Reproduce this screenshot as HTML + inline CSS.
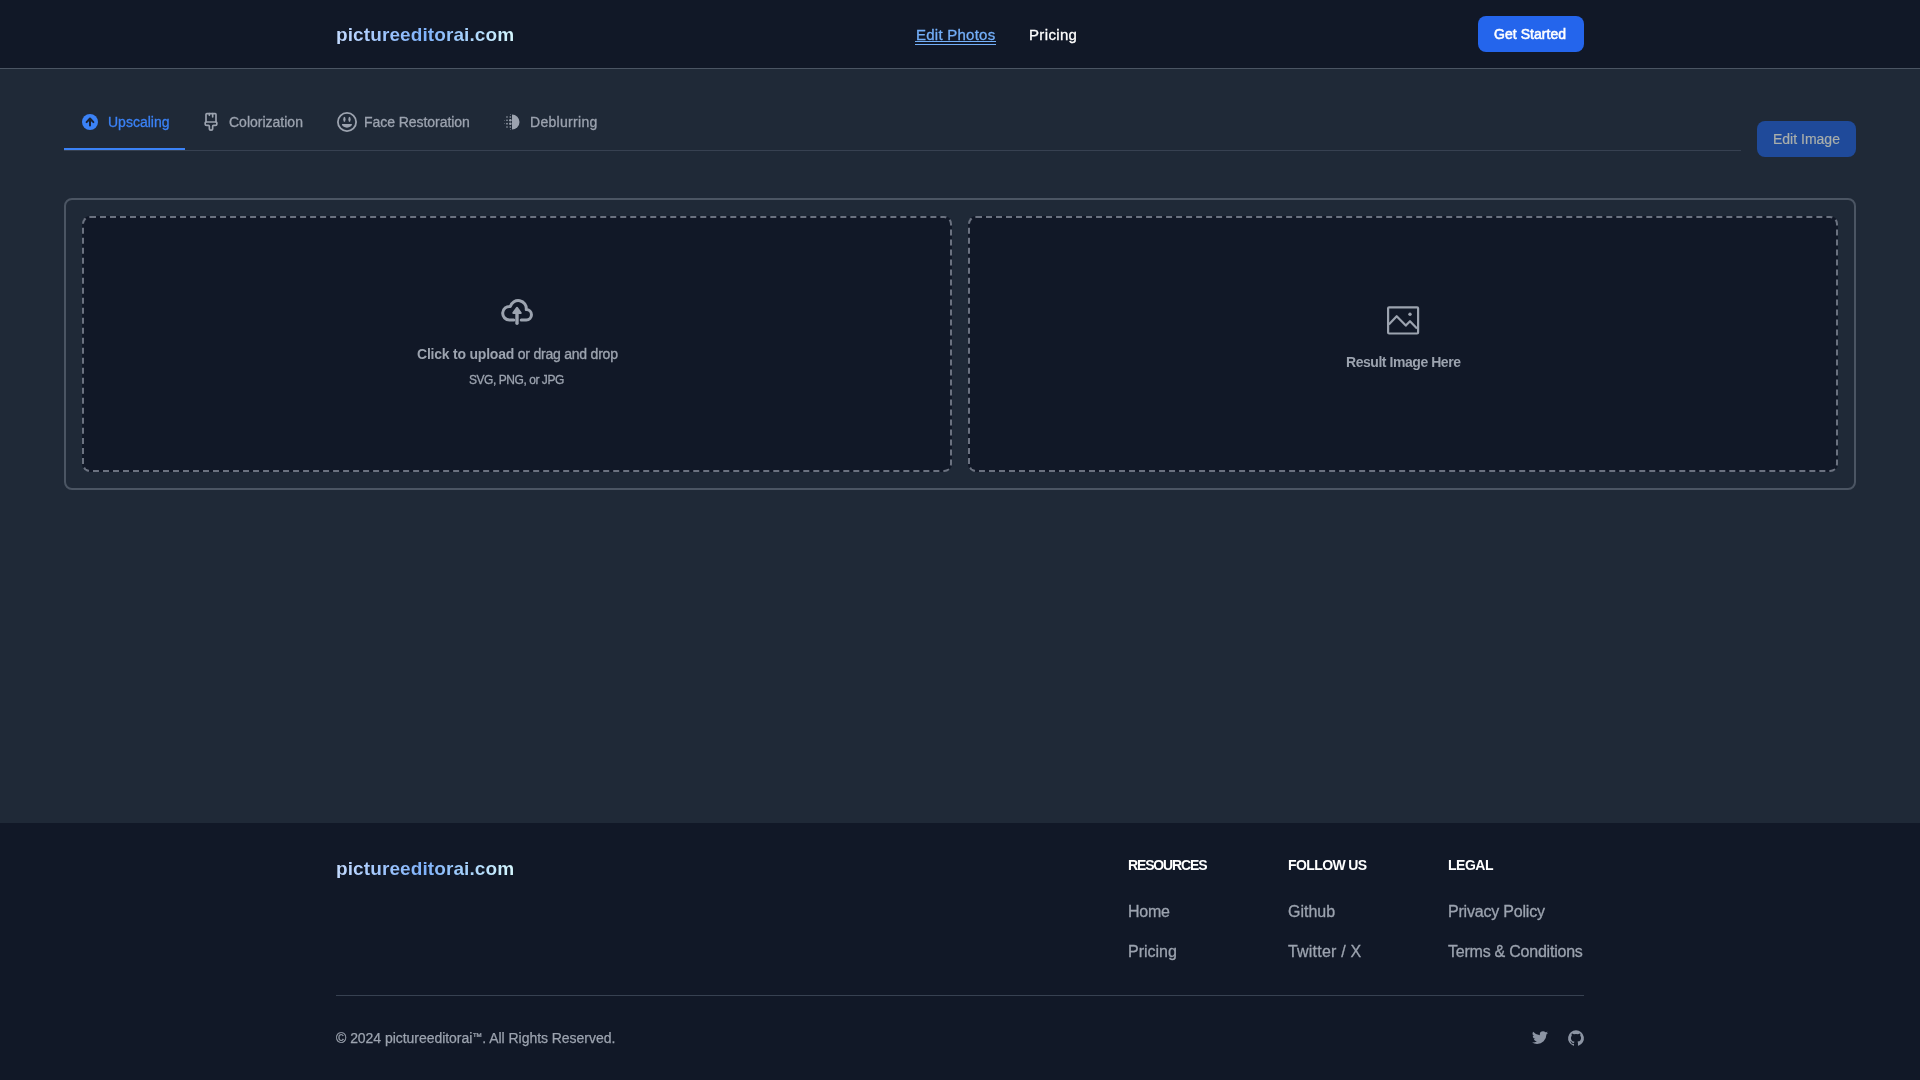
<!DOCTYPE html>
<html>
<head>
<meta charset="utf-8">
<style>
*{margin:0;padding:0;box-sizing:border-box}
html,body{width:1920px;height:1080px;overflow:hidden;background:#1f2937;font-family:"Liberation Sans",sans-serif}
.a{position:absolute;white-space:nowrap;line-height:1;will-change:transform}
#hdr{position:absolute;left:0;top:0;width:1920px;height:69px;background:#111827;border-bottom:1px solid #4b5563}
#main{position:absolute;left:0;top:69px;width:1920px;height:754px;background:#1f2937}
#ftr{position:absolute;left:0;top:823px;width:1920px;height:257px;background:#111827}
.logo{font-size:19px;font-weight:700;letter-spacing:0.1px;background:linear-gradient(90deg,#c3dafe 0%,#7fb2fb 50%,#d4f6fd 100%);-webkit-background-clip:text;background-clip:text;color:transparent}
.btn{position:absolute;border-radius:6px}
.tabtxt{font-size:14px;color:#9ca3af;-webkit-text-stroke:0.3px currentColor}
.flink{font-size:16px;color:#9ca3af;-webkit-text-stroke:0.3px currentColor}
.fhead{font-size:14px;font-weight:700;color:#fff;letter-spacing:-0.7px}
svg{position:absolute;overflow:visible}
</style>
</head>
<body>
<div id="hdr">
  <div class="a logo" style="left:336px;top:24.7px">pictureeditorai.com</div>
  <div class="a" style="left:916px;top:27.2px;font-size:15px;color:#74aff9;letter-spacing:0.25px;-webkit-text-stroke:0.3px currentColor">Edit Photos</div>
  <div style="position:absolute;left:915px;top:41px;width:81px;height:1px;background:#74aff9"></div>
  <div style="position:absolute;left:915px;top:44px;width:81px;height:1px;background:#74aff9"></div>
  <div class="a" style="left:1028.5px;top:27.2px;font-size:15px;color:#fff;letter-spacing:0.35px;-webkit-text-stroke:0.3px currentColor">Pricing</div>
  <div class="btn" style="left:1478px;top:16px;width:106px;height:36px;background:#2465ec;border-radius:8px"></div>
  <div class="a" style="left:1494px;top:27px;font-size:14px;font-weight:400;color:#fff;letter-spacing:0.05px;-webkit-text-stroke:0.55px currentColor">Get Started</div>
</div>
<div id="main"></div>

<!-- tabs -->
<div style="position:absolute;left:64px;top:150px;width:1677px;height:1px;background:#374151"></div>
<div style="position:absolute;left:64px;top:148px;width:121px;height:2px;background:#3b82f6"></div>

<svg style="left:80px;top:112px" width="20" height="20" viewBox="0 0 20 20">
  <circle cx="10" cy="10" r="8" fill="#3b82f6"/>
  <path d="M6.6 10.1 L10 6.5 L13.4 10.1 M10 6.7 V13.6" fill="none" stroke="#1b2230" stroke-width="2" stroke-linecap="round" stroke-linejoin="round"/>
</svg>
<div class="a tabtxt" style="left:108px;top:115px;color:#3b82f6">Upscaling</div>

<svg style="left:201px;top:112px" width="20" height="20" viewBox="0 0 24 24" fill="none" stroke="#9ca3af" stroke-width="2" stroke-linecap="round" stroke-linejoin="round">
  <path d="M10 2v2"/><path d="M14 2v4"/><path d="M17 2a1 1 0 0 1 1 1v9H6V3a1 1 0 0 1 1-1z"/>
  <path d="M6 12a1 1 0 0 0-1 1v1a2 2 0 0 0 2 2h2a1 1 0 0 1 1 1v2.9a2 2 0 1 0 4 0V17a1 1 0 0 1 1-1h2a2 2 0 0 0 2-2v-1a1 1 0 0 0-1-1"/>
</svg>
<div class="a tabtxt" style="left:229px;top:115px">Colorization</div>

<svg style="left:337px;top:112px" width="20" height="20" viewBox="0 0 20 20">
  <circle cx="10" cy="10" r="9.1" fill="none" stroke="#9ca3af" stroke-width="1.8"/>
  <ellipse cx="7.4" cy="7.3" rx="1.1" ry="2.6" fill="#9ca3af"/>
  <ellipse cx="12.5" cy="7.3" rx="1.1" ry="2.6" fill="#9ca3af"/>
  <path d="M4.9 12 H15 A5.05 3.7 0 0 1 4.9 12 Z" fill="#9ca3af"/>
</svg>
<div class="a tabtxt" style="left:364px;top:115px;letter-spacing:-0.05px">Face Restoration</div>

<svg style="left:502px;top:112px" width="20" height="20" viewBox="0 0 24 24" fill="#9ca3af">
  <path d="M12 3v18a9 9 0 0 0 0-18z"/>
  <circle cx="10" cy="3" r=".5"/><circle cx="10" cy="21" r=".5"/>
  <circle cx="10" cy="6" r="1"/><circle cx="10" cy="10" r="1.5"/><circle cx="10" cy="14" r="1.5"/><circle cx="10" cy="18" r="1"/>
  <circle cx="6" cy="6" r="1"/><circle cx="6" cy="10" r="1"/><circle cx="6" cy="14" r="1"/><circle cx="6" cy="18" r="1"/>
  <circle cx="3" cy="10" r=".5"/><circle cx="3" cy="14" r=".5"/>
</svg>
<div class="a tabtxt" style="left:530px;top:115px;letter-spacing:0.3px">Deblurring</div>

<div class="btn" style="left:1757px;top:121px;width:99px;height:36px;background:#1f4a9a;border-radius:8px"></div>
<div class="a" style="left:1773px;top:132px;font-size:14px;color:#a9aeab;-webkit-text-stroke:0.2px currentColor">Edit Image</div>

<!-- upload box -->
<div style="position:absolute;left:64px;top:198px;width:1792px;height:292px;border:2px solid #4b5563;border-radius:8px"></div>
<div style="position:absolute;left:82px;top:216px;width:870px;height:256px;border:2px dashed #6b7280;border-radius:8px;background:#111827"></div>
<div style="position:absolute;left:968px;top:216px;width:870px;height:256px;border:2px dashed #6b7280;border-radius:8px;background:#111827"></div>

<svg style="left:501px;top:299px" width="32" height="27" viewBox="0 0 32 27" fill="none" stroke="#9ca3af" stroke-width="3" stroke-linecap="round" stroke-linejoin="round">
  <path d="M12.8 21 H8.5 A6.8 6.8 0 1 1 9.39 7.46 A8.1 8.1 0 0 1 25.24 10.6 A5.2 5.2 0 0 1 25.3 21 H20.2"/>
</svg>
<svg style="left:501px;top:299px" width="32" height="27" viewBox="0 0 32 27">
  <path d="M12.4 14 L16 9 L19.6 14 Z" fill="#9ca3af" stroke="#9ca3af" stroke-width="2.2" stroke-linejoin="round"/>
  <path d="M16 13 V24.3" stroke="#9ca3af" stroke-width="3.4" stroke-linecap="round"/>
</svg>
<div class="a" style="left:417px;top:347px;font-size:14px;color:#9ca3af;letter-spacing:-0.22px;-webkit-text-stroke:0.35px currentColor"><b style="-webkit-text-stroke:0">Click to upload</b> or drag and drop</div>
<div class="a" style="left:469px;top:374px;font-size:12px;color:#9ca3af;letter-spacing:-0.45px;-webkit-text-stroke:0.3px currentColor">SVG, PNG, or JPG</div>

<svg style="left:1386px;top:305px" width="34" height="30" viewBox="0 0 34 30" fill="none" stroke="#9ca3af" stroke-width="2.2" stroke-linejoin="round">
  <rect x="2.1" y="2.3" width="30" height="26.2" rx="1"/>
  <path d="M2.8 19.6 L10.7 11.2 L19.8 20.6 L24 16.2 L31 23.6"/>
  <circle cx="24" cy="9.2" r="1.7" fill="#9ca3af" stroke="none"/>
</svg>
<div class="a" style="left:1346px;top:355px;font-size:14px;font-weight:700;color:#9ca3af;letter-spacing:-0.45px">Result Image Here</div>

<!-- footer -->
<div id="ftr">
  <div class="a logo" style="left:336px;top:36.4px">pictureeditorai.com</div>
  <div class="a fhead" style="left:1128px;top:35px;letter-spacing:-1.15px">RESOURCES</div>
  <div class="a fhead" style="left:1288px;top:35px;letter-spacing:-0.6px">FOLLOW US</div>
  <div class="a fhead" style="left:1448px;top:35px;letter-spacing:-0.5px">LEGAL</div>
  <div class="a flink" style="left:1127.5px;top:80.5px;letter-spacing:-0.25px">Home</div>
  <div class="a flink" style="left:1128px;top:120.5px">Pricing</div>
  <div class="a flink" style="left:1288px;top:80.5px">Github</div>
  <div class="a flink" style="left:1288px;top:120.5px;letter-spacing:0.2px">Twitter / X</div>
  <div class="a flink" style="left:1447.5px;top:80.5px;letter-spacing:-0.2px">Privacy Policy</div>
  <div class="a flink" style="left:1448px;top:120.5px;letter-spacing:-0.23px">Terms &amp; Conditions</div>
  <div style="position:absolute;left:336px;top:172px;width:1248px;height:1px;background:#374151"></div>
  <div class="a" style="left:336px;top:208.4px;font-size:14px;color:#9ca3af;letter-spacing:-0.04px;-webkit-text-stroke:0.25px currentColor">© 2024 pictureeditorai<span style="font-size:10px;vertical-align:3px">™</span>. All Rights Reserved.</div>
  <svg style="left:1532px;top:207px" width="16" height="16" viewBox="0 0 20 17" fill="#8c94a3">
    <path d="M20 1.892a8.178 8.178 0 0 1-2.355.635 4.074 4.074 0 0 0 1.8-2.235 8.344 8.344 0 0 1-2.605.98A4.13 4.13 0 0 0 13.85 0a4.068 4.068 0 0 0-4.1 4.038 4 4 0 0 0 .105.919A11.705 11.705 0 0 1 1.4.734a4.006 4.006 0 0 0 1.268 5.392 4.165 4.165 0 0 1-1.859-.5v.05A4.057 4.057 0 0 0 4.1 9.635a4.19 4.19 0 0 1-1.856.07 4.108 4.108 0 0 0 3.831 2.807A8.36 8.36 0 0 1 0 14.184 11.732 11.732 0 0 0 6.291 16 11.502 11.502 0 0 0 17.964 4.5c0-.177 0-.35-.012-.523A8.143 8.143 0 0 0 20 1.892Z"/>
  </svg>
  <svg style="left:1568px;top:207px" width="16" height="16" viewBox="0 0 20 20" fill="#8c94a3">
    <path d="M10 .333A9.911 9.911 0 0 0 6.866 19.65c.5.092.678-.215.678-.477 0-.237-.01-1.017-.014-1.845-2.757.6-3.338-1.169-3.338-1.169a2.627 2.627 0 0 0-1.1-1.451c-.9-.615.07-.6.07-.6a2.084 2.084 0 0 1 1.518 1.021 2.11 2.11 0 0 0 2.884.823c.044-.503.268-.973.63-1.325-2.2-.25-4.516-1.1-4.516-4.9A3.832 3.832 0 0 1 4.7 7.068a3.56 3.56 0 0 1 .095-2.623s.832-.266 2.726 1.016a9.409 9.409 0 0 1 4.962 0c1.89-1.282 2.717-1.016 2.717-1.016.366.83.402 1.768.1 2.623a3.827 3.827 0 0 1 1.02 2.659c0 3.807-2.319 4.644-4.525 4.889a2.366 2.366 0 0 1 .673 1.834c0 1.326-.012 2.394-.012 2.72 0 .263.18.572.681.475A9.911 9.911 0 0 0 10 .333Z"/>
  </svg>
</div>
</body>
</html>
